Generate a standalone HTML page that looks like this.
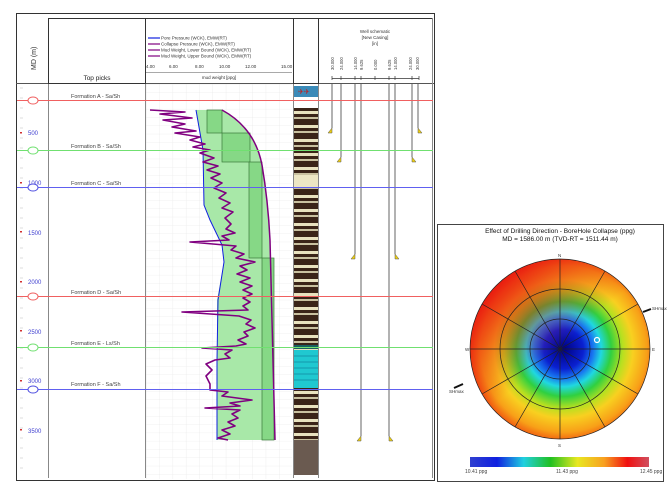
<!DOCTYPE html>
<html><head><meta charset="utf-8"><style>
html,body{margin:0;padding:0;background:#fff;width:672px;height:486px;overflow:hidden}
svg{display:block;font-family:"Liberation Sans",sans-serif}
</style></head><body>
<svg width="672" height="486" viewBox="0 0 672 486" xmlns="http://www.w3.org/2000/svg">
<defs>
<pattern id="grid" width="13.3" height="8.3" patternUnits="userSpaceOnUse" x="146" y="84">
<path d="M0 0H13.3M0 0V8.3" stroke="#e4e4e4" stroke-width="0.6" fill="none"/>
</pattern>
<pattern id="lith" width="25" height="14" patternUnits="userSpaceOnUse" y="108">
<rect width="25" height="14" fill="#3a2418"/>
<rect y="3" width="25" height="3" fill="#e8e2bf"/>
<rect y="9" width="25" height="2" fill="#c9c1a0"/>
</pattern>
<radialGradient id="pol" cx="0.52" cy="0.5" r="0.55">
<stop offset="0" stop-color="#000080"/>
<stop offset="0.2" stop-color="#0a20d0"/>
<stop offset="0.3" stop-color="#1878f0"/>
<stop offset="0.38" stop-color="#20d8e0"/>
<stop offset="0.48" stop-color="#30d040"/>
<stop offset="0.6" stop-color="#b8e020"/>
<stop offset="0.7" stop-color="#f8d020"/>
<stop offset="0.84" stop-color="#f8a018"/>
<stop offset="0.95" stop-color="#f05010"/>
<stop offset="1" stop-color="#e02010"/>
</radialGradient>
<linearGradient id="tl" x1="0.2" y1="0.05" x2="0.55" y2="0.45">
<stop offset="0" stop-color="#e81010" stop-opacity="0.9"/>
<stop offset="1" stop-color="#e81010" stop-opacity="0"/>
</linearGradient>
<linearGradient id="cb" x1="0" x2="1">
<stop offset="0" stop-color="#3040d0"/><stop offset="0.15" stop-color="#1020e0"/>
<stop offset="0.3" stop-color="#20d0e0"/><stop offset="0.45" stop-color="#20c020"/>
<stop offset="0.6" stop-color="#e8e820"/><stop offset="0.75" stop-color="#f8a020"/>
<stop offset="0.88" stop-color="#f01010"/><stop offset="1" stop-color="#d05060"/>
</linearGradient>
</defs>

<rect x="16.5" y="13.5" width="418" height="467" fill="#fff" stroke="#333"/>
<rect x="146" y="84" width="146" height="395" fill="url(#grid)"/>
<line x1="16" y1="83.5" x2="434" y2="83.5" stroke="#555"/>
<g stroke="#888" stroke-width="1">
<line x1="48.5" y1="18" x2="48.5" y2="478"/>
<line x1="145.5" y1="18" x2="145.5" y2="478"/>
<line x1="293.5" y1="18" x2="293.5" y2="478"/>
<line x1="318.5" y1="18" x2="318.5" y2="478"/>
<line x1="432.5" y1="18" x2="432.5" y2="478"/>
</g>
<line x1="48" y1="18.5" x2="432" y2="18.5" stroke="#333"/>
<rect x="48.5" y="18.5" width="97" height="65" fill="none" stroke="#333"/>
<rect x="293.5" y="18.5" width="25" height="65" fill="none" stroke="#333"/>
<text x="36" y="70" font-size="7" fill="#333" transform="rotate(-90 36 70)">MD (m)</text>
<text x="97" y="80" font-size="6.5" text-anchor="middle" fill="#222">Top picks</text>

<g font-size="4.5" fill="#333">
<line x1="148" y1="38" x2="160" y2="38" stroke="#1020e0" stroke-width="1.2"/><text x="161" y="39.5">Pore Pressure (WCK), EMW(RT)</text>
<line x1="148" y1="44" x2="160" y2="44" stroke="#800080" stroke-width="1.2"/><text x="161" y="45.5">Collapse Pressure (WCK), EMW(RT)</text>
<line x1="148" y1="50" x2="160" y2="50" stroke="#800080" stroke-width="1.2"/><text x="161" y="51.5">Mud Weight, Lower Bound (WCK), EMW(RT)</text>
<line x1="148" y1="56" x2="160" y2="56" stroke="#800080" stroke-width="1.2"/><text x="161" y="57.5">Mud Weight, Upper Bound (WCK), EMW(RT)</text>
<text x="146" y="68">4.00</text><text x="169" y="68">6.00</text><text x="195" y="68">8.00</text><text x="219" y="68">10.00</text><text x="245" y="68">12.00</text><text x="281" y="68">15.00</text>
<line x1="146" y1="72.5" x2="292" y2="72.5" stroke="#555" stroke-width="0.6"/>
<text x="219" y="79" text-anchor="middle">mud weight [ppg]</text>
</g>

<g stroke="#bbb" stroke-width="0.6">
<path d="M20 88h3M20 98h3M20 108h3M20 118h3M20 128h3M20 138h3M20 148h3M20 158h3M20 168h3M20 178h3M20 188h3M20 198h3M20 208h3M20 218h3M20 228h3M20 238h3M20 248h3M20 258h3M20 268h3M20 278h3M20 288h3M20 298h3M20 308h3M20 318h3M20 328h3M20 338h3M20 348h3M20 358h3M20 368h3M20 378h3M20 388h3M20 398h3M20 408h3M20 418h3M20 428h3M20 438h3M20 448h3M20 458h3M20 468h3"/>
</g>
<g font-size="6" fill="#4040d0">
<text x="28" y="135">500</text><text x="28" y="185">1000</text><text x="28" y="235">1500</text><text x="28" y="284">2000</text><text x="28" y="334">2500</text><text x="28" y="383">3000</text><text x="28" y="433">3500</text>
</g>
<g fill="#d03030"><rect x="20" y="132" width="2" height="1.5"/><rect x="20" y="182" width="2" height="1.5"/><rect x="20" y="231" width="2" height="1.5"/><rect x="20" y="281" width="2" height="1.5"/><rect x="20" y="330" width="2" height="1.5"/><rect x="20" y="380" width="2" height="1.5"/><rect x="20" y="429" width="2" height="1.5"/></g>

<path d="M196 110 L222 110 Q255 128 262 165 Q268 200 270 240 L275 440 L217 440 L217 300 L224 262 L222 245 L210 220 L204 205 L203 150 Z" fill="#a8e8a8"/>
<g fill="#86d886" stroke="#3a7a3a" stroke-width="0.7">
<rect x="207" y="110" width="15" height="23"/>
<rect x="222" y="133" width="28" height="29"/>
<rect x="249" y="162" width="13" height="96"/>
<rect x="262" y="258" width="12" height="182"/>
</g>
<path d="M222 110 Q255 128 262 165 Q268 200 270 240 L275 440" fill="none" stroke="#800080" stroke-width="1.5"/>
<polyline points="196,110 203,150 204,205 210,220 222,245 224,262 218,300 217,360 217,440" fill="none" stroke="#1020e0" stroke-width="1"/>
<polyline fill="none" stroke="#800080" stroke-width="1.6" stroke-linejoin="round" points="150,110 185,112 160,114 192,118 163,120 185,124 172,127 196,131 175,133 200,137 190,140 205,144 193,147 210,150 200,153 214,158 203,162 218,166 207,170 220,174 211,178 222,183 214,188 226,193 219,198 230,203 222,208 233,212 225,218 231,224 226,229 235,233 222,236 229,240 190,242 236,246 231,250 244,254 236,258 255,262 240,266 247,270 237,274 250,278 240,282 252,286 243,290 252,294 243,298 250,302 243,306 248,310 182,312 239,316 251,320 246,324 255,328 244,332 248,336 238,340 246,344 236,346 202,348 232,350 225,354 230,358 215,360 206,364 212,370 206,376 210,384 210,390 228,392 222,396 252,400 230,403 240,406 205,408 240,410 232,414 238,418 228,422 235,426 222,430 230,434 218,438 228,440"/>

<rect x="294" y="86" width="24" height="11" fill="#3a8ab8"/>
<text x="298" y="94" font-size="7" fill="#c02020">✈✈</text>
<rect x="294" y="108" width="24" height="242" fill="url(#lith)"/>
<rect x="294" y="175" width="24" height="12" fill="#ece6c4"/>
<rect x="294" y="345" width="24" height="4" fill="#186060"/>
<rect x="294" y="350" width="24" height="38" fill="#20c8d0"/>
<path d="M294 356h24M294 362h24M294 368h24M294 374h24M294 380h24" stroke="#0a6a8a" stroke-width="0.6"/>
<rect x="294" y="388" width="24" height="87" fill="url(#lith)"/>
<rect x="294" y="440" width="24" height="35" fill="#6a5a50"/>

<g font-size="4.5" fill="#333">
<text x="375" y="33" text-anchor="middle">Well schematic</text>
<text x="375" y="39" text-anchor="middle">[New Casing]</text>
<text x="375" y="45" text-anchor="middle">[in]</text>
</g>
<g font-size="4.2" fill="#333">
<text transform="translate(334,70) rotate(-90)">30.000</text>
<text transform="translate(343,70) rotate(-90)">24.000</text>
<text transform="translate(357,70) rotate(-90)">14.000</text>
<text transform="translate(363,70) rotate(-90)">9.625</text>
<text transform="translate(377,70) rotate(-90)">0.000</text>
<text transform="translate(391,70) rotate(-90)">9.625</text>
<text transform="translate(397,70) rotate(-90)">14.000</text>
<text transform="translate(412,70) rotate(-90)">24.000</text>
<text transform="translate(419,70) rotate(-90)">30.000</text>
</g>
<path d="M332 78.5H419M332 76v4M341 76v4M355 76v4M361 76v4M375 76v4M389 76v4M395 76v4M412 76v4M419 76v4" stroke="#333" stroke-width="0.7" fill="none"/>
<g stroke="#888" stroke-width="1.3">
<line x1="332" y1="84" x2="332" y2="128"/><line x1="418" y1="84" x2="418" y2="128"/>
<line x1="341" y1="84" x2="341" y2="157"/><line x1="412" y1="84" x2="412" y2="157"/>
<line x1="355" y1="84" x2="355" y2="254"/><line x1="395" y1="84" x2="395" y2="254"/>
<line x1="361" y1="84" x2="361" y2="436"/><line x1="389" y1="84" x2="389" y2="436"/>
</g>
<g fill="#f0d010" stroke="#555" stroke-width="0.5">
<path d="M332 128l-4 5h4z"/><path d="M418 128l4 5h-4z"/>
<path d="M341 157l-4 5h4z"/><path d="M412 157l4 5h-4z"/>
<path d="M355 254l-4 5h4z"/><path d="M395 254l4 5h-4z"/>
<path d="M361 436l-4 5h4z"/><path d="M389 436l4 5h-4z"/>
</g>

<g stroke-width="1">
<line x1="17" y1="100.5" x2="433" y2="100.5" stroke="#f06060"/>
<line x1="17" y1="150.5" x2="433" y2="150.5" stroke="#70e070"/>
<line x1="17" y1="187.5" x2="433" y2="187.5" stroke="#6060f0"/>
<line x1="17" y1="296.5" x2="433" y2="296.5" stroke="#f06060"/>
<line x1="17" y1="347.5" x2="433" y2="347.5" stroke="#70e070"/>
<line x1="17" y1="389.5" x2="433" y2="389.5" stroke="#6060f0"/>
</g>
<g fill="#fff" stroke-width="1">
<ellipse cx="33" cy="100.5" rx="5" ry="3.5" stroke="#f06060"/>
<ellipse cx="33" cy="150.5" rx="5" ry="3.5" stroke="#70e070"/>
<ellipse cx="33" cy="187.5" rx="5" ry="3.5" stroke="#5050e0"/>
<ellipse cx="33" cy="296.5" rx="5" ry="3.5" stroke="#f06060"/>
<ellipse cx="33" cy="347.5" rx="5" ry="3.5" stroke="#70e070"/>
<ellipse cx="33" cy="389.5" rx="5" ry="3.5" stroke="#5050e0"/>
</g>
<g font-size="5.5" fill="#444">
<text x="71" y="98">Formation A - Sa/Sh</text>
<text x="71" y="148">Formation B - Sa/Sh</text>
<text x="71" y="185">Formation C - Sa/Sh</text>
<text x="71" y="294">Formation D - Sa/Sh</text>
<text x="71" y="345">Formation E - Ls/Sh</text>
<text x="71" y="386">Formation F - Sa/Sh</text>
</g>

<rect x="437.5" y="224.5" width="226" height="257" fill="#fff" stroke="#444"/>
<text x="560" y="233" font-size="6.5" text-anchor="middle" fill="#111">Effect of Drilling Direction - BoreHole Collapse (ppg)</text>
<text x="560" y="241" font-size="6.5" text-anchor="middle" fill="#111">MD = 1586.00 m (TVD-RT = 1511.44 m)</text>
<circle cx="560" cy="349" r="90" fill="url(#pol)"/>
<circle cx="560" cy="349" r="90" fill="url(#tl)"/>
<g fill="none" stroke="#222" stroke-width="0.7">
<circle cx="560" cy="349" r="90"/>
<circle cx="560" cy="349" r="60"/>
<circle cx="560" cy="349" r="30"/>
<line x1="560" y1="259" x2="560" y2="439"/>
<line x1="470" y1="349" x2="650" y2="349"/>
<line x1="515" y1="271" x2="605" y2="427"/>
<line x1="605" y1="271" x2="515" y2="427"/>
<line x1="482" y1="304" x2="638" y2="394"/>
<line x1="638" y1="304" x2="482" y2="394"/>
</g>
<circle cx="597" cy="340" r="2.5" fill="none" stroke="#fff" stroke-width="1.2"/>
<g font-size="4.5" fill="#333">
<text x="558" y="257">N</text><text x="558" y="447">S</text><text x="465" y="351">W</text><text x="652" y="351">E</text>
<text x="652" y="310">SHmax</text><text x="449" y="393">SHmax</text>
</g>
<path d="M643 312l8-3M454 388l9-4" stroke="#111" stroke-width="2"/>
<rect x="470" y="457" width="179" height="10" fill="url(#cb)"/>
<g font-size="5" fill="#444"><text x="465" y="473">10.41 ppg</text><text x="556" y="473">11.43 ppg</text><text x="640" y="473">12.45 ppg</text></g>
</svg>
</body></html>
